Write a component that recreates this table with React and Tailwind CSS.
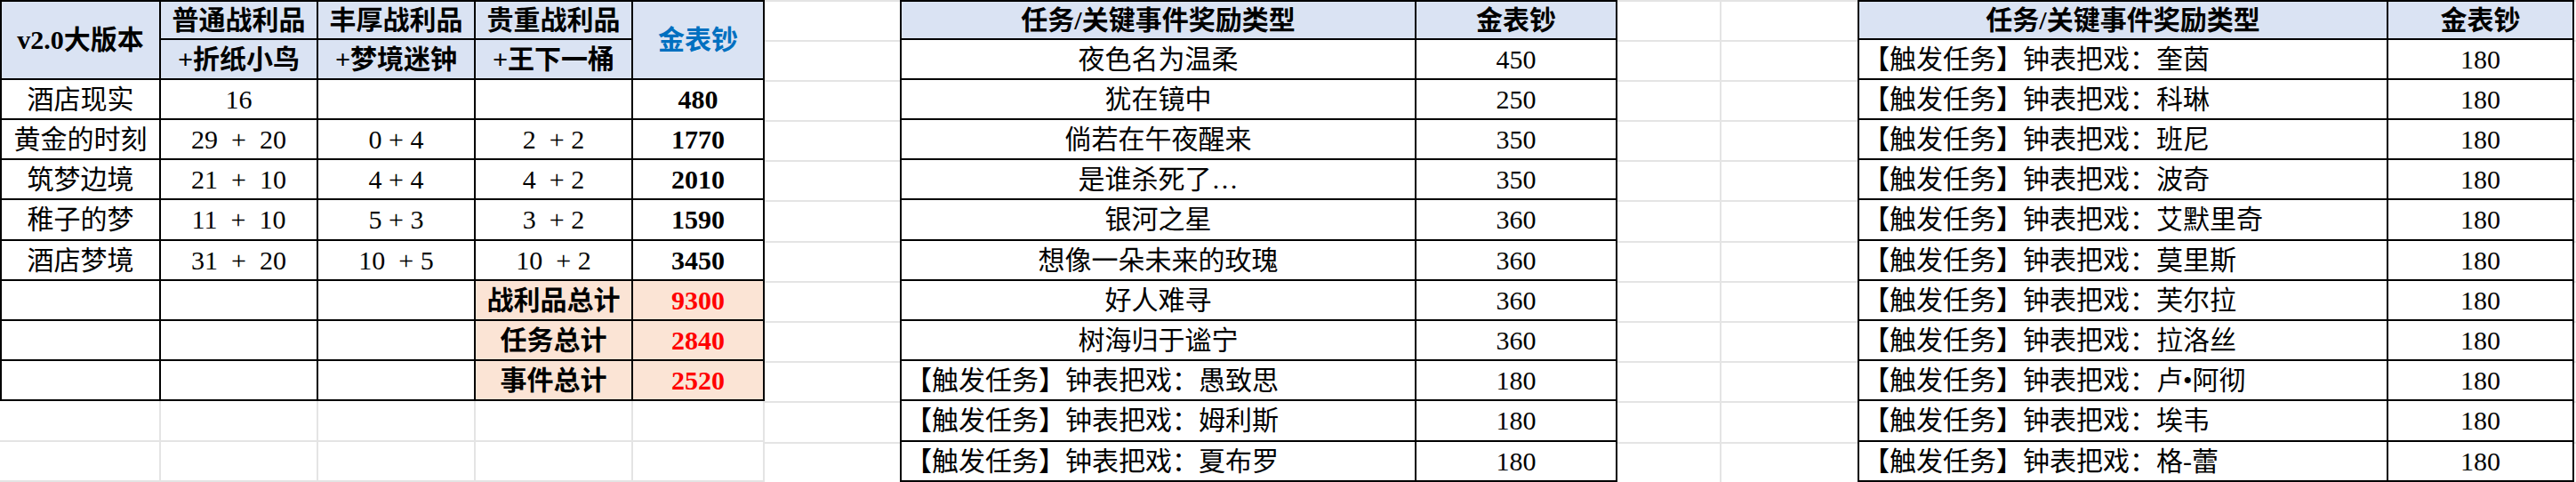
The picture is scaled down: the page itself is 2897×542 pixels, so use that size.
import React from 'react';

// shared row tracks so every block lines up like one sheet
const ROWS = "grid-rows-[45px_45px_45px_45px_45px_46px_45px_45px_45px_45px_46px_45px]";

const Cell = ({ className = "", children }) => (
  <div className={`flex items-center justify-center whitespace-pre border-r-2 border-b-2 border-black ${className}`}>
    {children}
  </div>
);

const Grey = ({ className = "" }) => (
  <div className={`border-r-2 border-b-2 border-[#e4e4e4] ${className}`} />
);

const GapColumn = ({ width }) => (
  <div className={`grid ${ROWS} ${width} border-t-2 border-[#e4e4e4]`}>
    {Array.from({ length: 12 }).map((_, i) => (
      <div key={i} className="border-b-2 border-[#e4e4e4]" />
    ))}
  </div>
);

const LootTable = () => {
  const rows = [
    ["酒店现实", "16", "", "", "480"],
    ["黄金的时刻", "29  +  20", "0 + 4", "2  + 2", "1770"],
    ["筑梦边境", "21  +  10", "4 + 4", "4  + 2", "2010"],
    ["稚子的梦", "11  +  10", "5 + 3", "3  + 2", "1590"],
    ["酒店梦境", "31  +  20", "10  + 5", "10  + 2", "3450"],
  ];
  const totals = [
    ["战利品总计", "9300"],
    ["任务总计", "2840"],
    ["事件总计", "2520"],
  ];

  return (
    <div className={`grid ${ROWS} grid-cols-[181px_177px_177px_177px_148px]`}>
      <Cell className="row-span-2 border-t-2 border-l-2 bg-[#dae3f3] font-bold">v2.0大版本</Cell>
      <Cell className="border-t-2 bg-[#dae3f3] font-bold">普通战利品</Cell>
      <Cell className="border-t-2 bg-[#dae3f3] font-bold">丰厚战利品</Cell>
      <Cell className="border-t-2 bg-[#dae3f3] font-bold">贵重战利品</Cell>
      <Cell className="row-span-2 border-t-2 bg-[#dae3f3] font-bold text-[#0070c0]">金表钞</Cell>
      <Cell className="bg-[#dae3f3] font-bold">+折纸小鸟</Cell>
      <Cell className="bg-[#dae3f3] font-bold">+梦境迷钟</Cell>
      <Cell className="bg-[#dae3f3] font-bold">+王下一桶</Cell>

      {rows.map((r) => (
        <React.Fragment key={r[0]}>
          <Cell className="border-l-2">{r[0]}</Cell>
          <Cell>{r[1]}</Cell>
          <Cell>{r[2]}</Cell>
          <Cell>{r[3]}</Cell>
          <Cell className="font-bold">{r[4]}</Cell>
        </React.Fragment>
      ))}

      {totals.map(([label, value]) => (
        <React.Fragment key={label}>
          <Cell className="border-l-2" />
          <Cell />
          <Cell />
          <Cell className="bg-[#fbe4d5] font-bold">{label}</Cell>
          <Cell className="bg-[#fbe4d5] font-bold text-[#ff0000]">{value}</Cell>
        </React.Fragment>
      ))}

      {Array.from({ length: 10 }).map((_, i) => (
        <Grey key={i} />
      ))}
    </div>
  );
};

const RewardTable = ({ cols, items }) => (
  <div className={`grid ${ROWS} ${cols}`}>
    <Cell className="border-t-2 border-l-2 bg-[#dae3f3] font-bold">任务/关键事件奖励类型</Cell>
    <Cell className="border-t-2 bg-[#dae3f3] font-bold">金表钞</Cell>
    {items.map(([name, value, left]) => (
      <React.Fragment key={name}>
        <Cell className={`border-l-2 ${left ? "justify-start pl-1" : ""}`}>{name}</Cell>
        <Cell>{value}</Cell>
      </React.Fragment>
    ))}
  </div>
);

const tasks = [
  ["夜色名为温柔", "450"],
  ["犹在镜中", "250"],
  ["倘若在午夜醒来", "350"],
  ["是谁杀死了…", "350"],
  ["银河之星", "360"],
  ["想像一朵未来的玫瑰", "360"],
  ["好人难寻", "360"],
  ["树海归于谧宁", "360"],
  ["【触发任务】钟表把戏：愚致思", "180", true],
  ["【触发任务】钟表把戏：姆利斯", "180", true],
  ["【触发任务】钟表把戏：夏布罗", "180", true],
];

const events = ["奎茵", "科琳", "班尼", "波奇", "艾默里奇", "莫里斯", "芙尔拉", "拉洛丝", "卢•阿彻", "埃韦", "格-蕾"].map(
  (n) => [`【触发任务】钟表把戏：${n}`, "180", true]
);

export default function App() {
  return (
    <div className="flex h-[542px] w-[2897px] overflow-hidden bg-white text-[30px] leading-none text-black font-['Liberation_Serif','Noto_Sans_CJK_SC',serif]">
      <LootTable />
      <GapColumn width="w-[152px]" />
      <RewardTable cols="grid-cols-[581px_226px]" items={tasks} />
      <GapColumn width="w-[117px] border-r-2" />
      <GapColumn width="w-[153px]" />
      <RewardTable cols="grid-cols-[597px_209px]" items={events} />
      <GapColumn width="w-[2px]" />
    </div>
  );
}
